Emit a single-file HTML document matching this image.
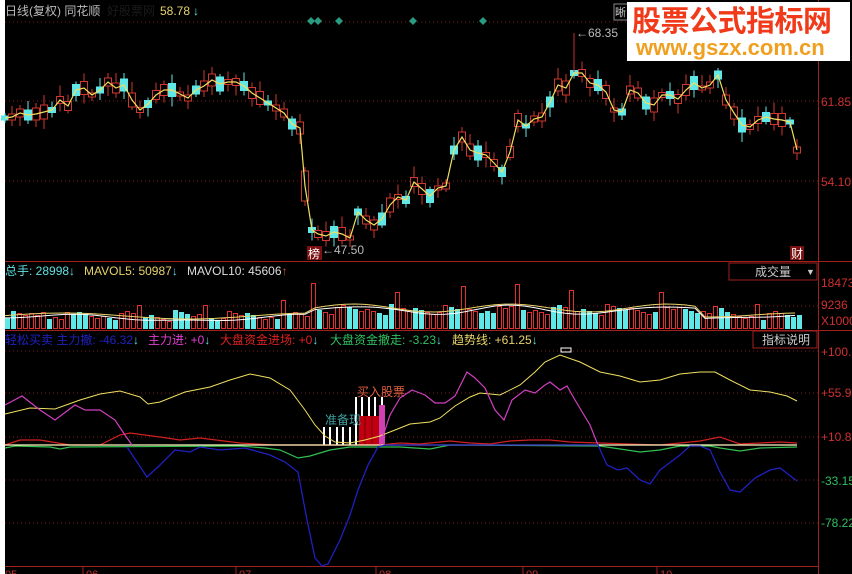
<!DOCTYPE html>
<html><head><meta charset="utf-8"><style>
html,body{margin:0;padding:0;background:#000;width:852px;height:574px;overflow:hidden;font-family:"Liberation Sans","Noto Sans CJK SC",sans-serif}
svg{position:absolute;left:0;top:0}
text{font-family:"Liberation Sans","Noto Sans CJK SC",sans-serif}
#vol rect,#candles rect{shape-rendering:crispEdges}
</style></head><body>
<svg id="s" width="852" height="574" viewBox="0 0 852 574">
<rect width="852" height="574" fill="#000"/>
<rect x="0" y="0" width="5" height="574" fill="#fff"/>
<g stroke="#7a1a1a" stroke-dasharray="1,3" stroke-width="1">
<line x1="5" y1="22" x2="818" y2="22"/><line x1="5" y1="101" x2="818" y2="101"/><line x1="5" y1="181" x2="818" y2="181"/>
<line x1="5" y1="306" x2="818" y2="306"/>
<line x1="5" y1="351" x2="818" y2="351"/><line x1="5" y1="393" x2="818" y2="393"/><line x1="5" y1="437" x2="818" y2="437"/><line x1="5" y1="480" x2="818" y2="480"/><line x1="5" y1="523" x2="818" y2="523"/>
</g>
<g stroke="#a02020" stroke-width="1">
<line x1="818.5" y1="0" x2="818.5" y2="574"/>
<line x1="5" y1="261.5" x2="852" y2="261.5"/>
<line x1="5" y1="330.5" x2="852" y2="330.5"/>
<line x1="5" y1="566.5" x2="818" y2="566.5"/>
</g>
<text x="5" y="15" font-size="12" fill="#bbb">日线(复权)  同花顺</text>
<text x="107" y="15" font-size="12" fill="#1a1a1a">好股票网</text>
<text x="160" y="15" font-size="12" fill="#e8d36a">58.78</text>
<text x="193" y="15" font-size="12" fill="#5fe0e0">↓</text>
<g fill="#2a9a80">
<path d="M307 21l4-4 4 4-4 4z"/><path d="M314 21l4-4 4 4-4 4z"/><path d="M335 21l4-4 4 4-4 4z"/><path d="M409 21l4-4 4 4-4 4z"/><path d="M479 21l4-4 4 4-4 4z"/>
</g>
<g font-size="12" fill="#d03030">
<text x="821" y="106">61.85</text><text x="821" y="186">54.10</text>
<text x="821" y="287">18473</text><text x="821" y="309">9236</text><text x="821" y="325">X1000</text>
<text x="821" y="356">+100.</text><text x="821" y="397">+55.9</text><text x="821" y="441">+10.8</text>
</g>
<g font-size="12" fill="#30c060"><text x="821" y="485">-33.15</text><text x="821" y="527">-78.22</text></g>
<g id="candles"></g>
<polyline id="pl" fill="none" stroke="#f0e060" stroke-width="1.2"/>
<text x="576" y="37" font-size="12" fill="#bbb">←68.35</text>
<line x1="574" y1="33" x2="574" y2="72" stroke="#c83030"/>
<rect x="307" y="246" width="15" height="14" fill="#7a1010"/><text x="308" y="258" font-size="12" fill="#fff">榜</text>
<text x="322" y="254" font-size="12" fill="#bbb">←47.50</text>
<rect x="790" y="246" width="14" height="14" fill="#7a1010"/><text x="791" y="258" font-size="12" fill="#fff">财</text>
<rect x="614" y="4" width="14" height="16" fill="none" stroke="#888"/><text x="615" y="16" font-size="11" fill="#ccc">晰</text>
<rect x="627" y="2" width="223" height="59" fill="#fff"/>
<text x="632" y="31" font-size="29" font-weight="bold" fill="#f03a1a" letter-spacing="-0.5">股票公式指标网</text>
<text x="636" y="55" font-size="22" font-weight="bold" fill="#f0a020">www.gszx.com.cn</text>
<text x="5" y="275" font-size="12" fill="#5fe0e0">总手: 28998↓</text>
<text x="84" y="275" font-size="12" fill="#e8d36a">MAVOL5: 50987<tspan fill="#5fe0e0">↓</tspan></text>
<text x="187" y="275" font-size="12" fill="#ddd">MAVOL10: 45606<tspan fill="#e05030">↑</tspan></text>
<rect x="729" y="263" width="88" height="17" fill="#000" stroke="#a02020"/>
<text x="755" y="276" font-size="12" fill="#ccc">成交量</text><text x="806" y="275" font-size="9" fill="#ccc">▼</text>
<g id="vol"></g>
<polyline id="m5" fill="none" stroke="#e8d36a" stroke-width="1"/>
<polyline id="m10" fill="none" stroke="#fff" stroke-width="1"/>
<text x="5" y="344" font-size="12" fill="#2020c0">轻松买卖 主力撤: -46.32<tspan fill="#5fe0e0">↓</tspan></text>
<text x="148" y="344" font-size="12" fill="#e040d0">主力进: +0<tspan fill="#5fe0e0">↓</tspan></text>
<text x="220" y="344" font-size="12" fill="#e02020">大盘资金进场: +0<tspan fill="#5fe0e0">↓</tspan></text>
<text x="330" y="344" font-size="12" fill="#30c060">大盘资金撤走: -3.23<tspan fill="#5fe0e0">↓</tspan></text>
<text x="452" y="344" font-size="12" fill="#e8d36a">趋势线: +61.25<tspan fill="#5fe0e0">↓</tspan></text>
<rect x="753" y="331" width="64" height="17" fill="#000" stroke="#a02020"/>
<text x="762" y="344" font-size="12" fill="#ccc">指标说明</text>
<rect x="561" y="348" width="10" height="4" fill="none" stroke="#fff"/>
<g fill="#fff">
<rect x="323" y="427" width="2" height="18"/><rect x="329" y="427" width="2" height="18"/><rect x="336" y="427" width="2" height="18"/><rect x="342" y="427" width="2" height="18"/><rect x="349" y="427" width="2" height="18"/>
<rect x="355" y="397" width="2" height="48"/><rect x="361" y="397" width="2" height="48"/><rect x="368" y="397" width="2" height="48"/><rect x="374" y="397" width="2" height="48"/><rect x="381" y="397" width="2" height="48"/>
</g>
<rect x="359" y="416" width="22" height="29" fill="#c00010"/>
<g stroke="#700" stroke-width="1"><line x1="365" y1="416" x2="365" y2="445"/><line x1="372" y1="416" x2="372" y2="445"/></g>
<rect x="379" y="405" width="6" height="40" fill="#d040b0"/>
<text x="325" y="424" font-size="12" fill="#40a0a0">准备现</text>
<text x="357" y="396" font-size="12" fill="#e06040">买入股票</text>
<polyline id="red" fill="none" stroke="#d02020" stroke-width="1.2"/>
<polyline id="grn" fill="none" stroke="#30c050" stroke-width="1.2"/>
<line x1="5" y1="445" x2="797" y2="445" stroke="#fff8c0" stroke-width="1.3"/>
<polyline id="yel" fill="none" stroke="#f0e060" stroke-width="1"/>
<polyline id="mag" fill="none" stroke="#d040c0" stroke-width="1.2"/>
<polyline id="mag2" fill="none" stroke="#d040c0" stroke-width="1.2"/>
<polyline id="blu" fill="none" stroke="#2020c0" stroke-width="1.3"/>
<g stroke="#a02020"><line x1="83" y1="566" x2="83" y2="574"/><line x1="236" y1="566" x2="236" y2="574"/><line x1="376" y1="566" x2="376" y2="574"/><line x1="523" y1="566" x2="523" y2="574"/><line x1="657" y1="566" x2="657" y2="574"/></g>
<g font-size="11" fill="#c03030"><text x="5" y="578">05</text><text x="86" y="578">06</text><text x="239" y="578">07</text><text x="379" y="578">08</text><text x="526" y="578">09</text><text x="660" y="578">10</text></g>
</svg>
<script>
(function(){
var NS="http://www.w3.org/2000/svg";
function el(p,t,a){var e=document.createElementNS(NS,t);for(var k in a)e.setAttribute(k,a[k]);p.appendChild(e);return e;}
function pts(a){return a.map(function(p){return p[0]+","+p[1]}).join(" ");}
function sp(id,a){document.getElementById(id).setAttribute("points",pts(a));}
var P=[[5,118],[12,117],[20,113],[28,115],[36,114],[44,112],[52,110],[60,100],[68,106],[76,90],[84,88],[92,95],[100,90],[108,82],[116,88],[124,85],[132,100],[140,110],[148,104],[156,95],[164,90],[172,90],[180,94],[188,98],[196,90],[204,86],[212,80],[220,84],[228,82],[236,82],[244,86],[252,93],[260,98],[268,103],[276,108],[284,113],[292,124],[300,128],[305,186],[312,230],[318,234],[326,236],[334,232],[342,234],[350,238],[358,212],[366,220],[374,225],[382,219],[390,205],[398,197],[406,200],[414,182],[422,189],[430,196],[438,188],[446,186],[454,150],[462,137],[470,150],[478,153],[486,155],[494,163],[502,172],[510,152],[518,120],[526,126],[534,119],[542,117],[550,102],[558,85],[566,88],[574,73],[582,73],[590,83],[598,85],[606,92],[614,110],[622,112],[630,90],[638,93],[646,103],[654,105],[662,95],[670,95],[678,99],[686,90],[694,83],[702,88],[710,85],[718,75],[726,100],[734,113],[742,125],[750,127],[758,120],[766,117],[774,119],[782,120],[790,122],[797,150]];
sp("pl",P);
var g=document.getElementById("candles");
for(var i=0;i<P.length;i++){var x=P[i][0],y=P[i][1];var up=(i*7)%3!=0;var c=up?"#d03830":"#60e8e8";
var h=4+((i*13)%11);var w1=3+((i*5)%9),w2=3+((i*11)%8);
if(i==38){h=30;}
el(g,"line",{x1:x,y1:y-h/2-w1,x2:x,y2:y+h/2+w2,stroke:c,"stroke-width":1});
el(g,"rect",{x:x-3.5,y:y-h/2,width:7,height:h,fill:up?"#000":c,stroke:c,"stroke-width":1});}
var v=document.getElementById("vol");var m5=[],m10=[];
var tall={51:283,65:292,76:286,85:284,94:290,109:292,46:300,125:304,33:305,22:305,6:312};
for(var i=0;i<133;i++){var x=5+i*6;if(x>797)break;
var r=((i*37+11)%17)/17;var up=r<0.55;
var base=318;if(x>310&&x<720)base=312;
var tp=base-((i*17)%9)+((i*5)%4);
if(tall[i]){tp=tall[i];up=true;}
var c=up?"#e03030":"#60e8e8";
if(up)el(v,"rect",{x:x+0.5,y:tp+0.5,width:4,height:328-tp,fill:"#000",stroke:c,"stroke-width":1});else el(v,"rect",{x:x,y:tp,width:5,height:329-tp,fill:c});}
for(var x=5;x<=797;x+=10){var b=316-3*Math.sin(x/40);if(x>310&&x<700)b=308-4*Math.sin(x/25);if(x>=700)b=315-2*Math.sin(x/30);m5.push([x,b.toFixed(1)]);m10.push([x,(b+2+Math.sin(x/17)).toFixed(1)]);}
sp("m5",m5);sp("m10",m10);
sp("yel",[[5,414],[30,408],[55,409],[80,400],[100,394],[120,391],[140,397],[148,404],[160,402],[185,392],[210,387],[230,380],[250,374],[270,378],[290,390],[305,410],[315,425],[325,436],[335,442],[350,443],[365,440],[380,436],[395,430],[410,424],[430,422],[440,418],[455,406],[470,397],[480,393],[500,395],[520,385],[535,372],[545,362],[560,355],[580,362],[600,372],[620,376],[640,382],[660,380],[680,374],[700,372],[715,372],[730,380],[750,390],[770,392],[787,396],[797,401]]);
sp("mag",[[5,405],[22,396],[40,410],[55,420],[75,405],[85,410],[100,410],[115,420],[125,435],[132,445]]);
sp("mag2",[[380,445],[390,415],[400,398],[412,390],[425,395],[435,403],[445,403],[455,396],[467,372],[475,378],[485,388],[495,410],[504,420],[512,400],[525,390],[535,393],[545,385],[550,382],[560,390],[567,386],[575,400],[590,425],[598,445]]);
sp("blu",[[127,447],[147,477],[160,465],[175,450],[190,452],[200,447],[220,450],[245,448],[270,455],[285,462],[298,472],[307,520],[315,558],[322,566],[328,564],[340,540],[350,515],[358,490],[368,465],[378,447],[385,445],[598,445],[607,465],[618,470],[627,468],[640,480],[650,484],[660,470],[680,455],[690,446],[700,446],[710,450],[720,472],[730,490],[740,492],[755,478],[770,470],[780,468],[797,481]]);
sp("red",[[5,445],[20,440],[40,440],[70,445],[100,445],[120,435],[130,433],[160,437],[180,440],[200,438],[240,443],[275,445],[380,445],[400,443],[420,444],[450,441],[470,443],[490,444],[510,441],[530,440],[550,440],[570,442],[600,443],[660,445],[700,441],[720,437],[740,444],[780,442],[797,443]]);
sp("grn",[[5,448],[15,446],[50,447],[60,449],[70,447],[240,446],[265,448],[280,450],[298,458],[310,456],[330,450],[350,447],[400,447],[430,449],[450,445],[600,446],[620,449],[640,452],[660,450],[680,446],[710,446],[720,448],[740,451],[760,448],[797,447]]);
})();
</script>
</body></html>
